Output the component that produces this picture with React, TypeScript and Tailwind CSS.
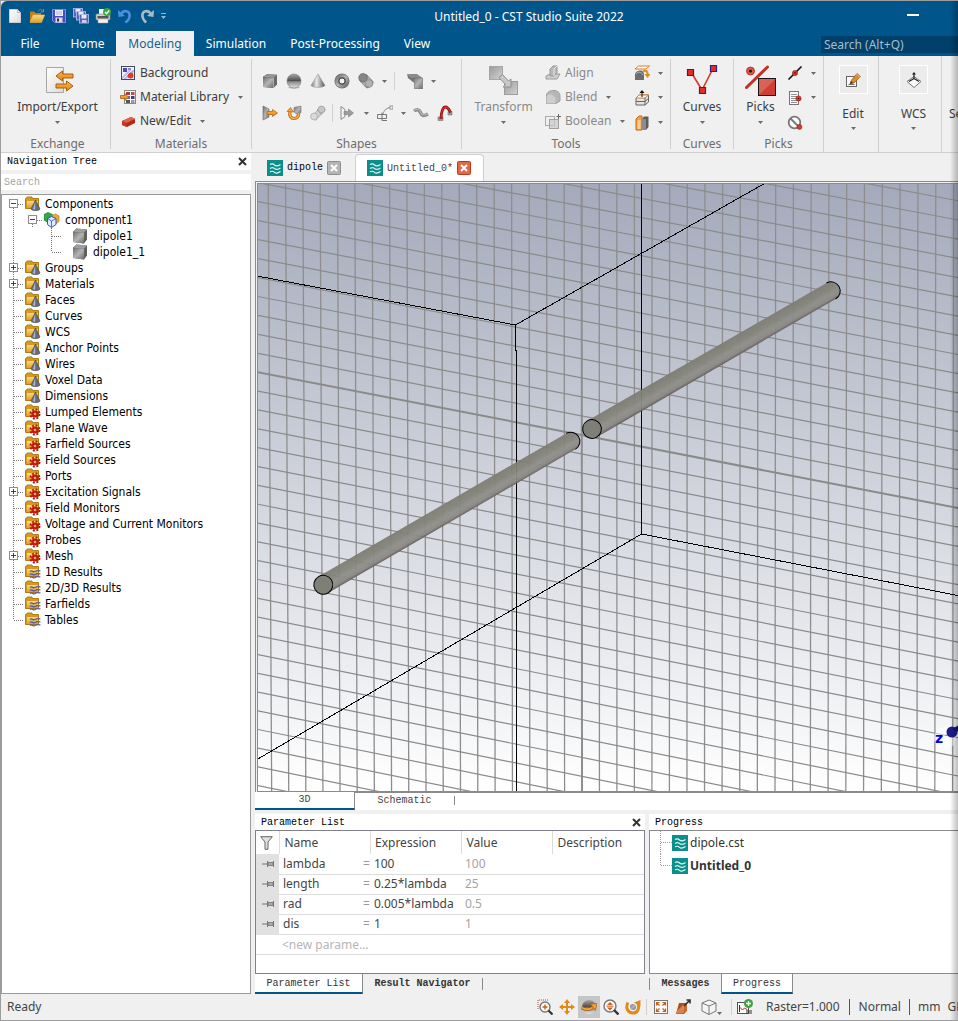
import React, { useState } from 'react';

interface TreeNode {
  label: string;
  icon: 'cone' | 'gear' | 'wave';
  expandable?: boolean;
}

interface Parameter {
  name: string;
  expression: string;
  value: string;
}

const treeNodes: TreeNode[] = [
  { label: 'Groups', icon: 'cone', expandable: true },
  { label: 'Materials', icon: 'cone', expandable: true },
  { label: 'Faces', icon: 'cone' },
  { label: 'Curves', icon: 'cone' },
  { label: 'WCS', icon: 'cone' },
  { label: 'Anchor Points', icon: 'cone' },
  { label: 'Wires', icon: 'cone' },
  { label: 'Voxel Data', icon: 'cone' },
  { label: 'Dimensions', icon: 'cone' },
  { label: 'Lumped Elements', icon: 'gear' },
  { label: 'Plane Wave', icon: 'gear' },
  { label: 'Farfield Sources', icon: 'gear' },
  { label: 'Field Sources', icon: 'gear' },
  { label: 'Ports', icon: 'gear' },
  { label: 'Excitation Signals', icon: 'gear', expandable: true },
  { label: 'Field Monitors', icon: 'gear' },
  { label: 'Voltage and Current Monitors', icon: 'gear' },
  { label: 'Probes', icon: 'gear' },
  { label: 'Mesh', icon: 'gear', expandable: true },
  { label: '1D Results', icon: 'wave' },
  { label: '2D/3D Results', icon: 'wave' },
  { label: 'Farfields', icon: 'wave' },
  { label: 'Tables', icon: 'wave' },
];

const parameters: Parameter[] = [
  { name: 'lambda', expression: '100', value: '100' },
  { name: 'length', expression: '0.25*lambda', value: '25' },
  { name: 'rad', expression: '0.005*lambda', value: '0.5' },
  { name: 'dis', expression: '1', value: '1' },
];

// Gradients shared by all the icons
const IconDefs = () => (
  <svg className="absolute h-0 w-0" aria-hidden="true">
    <defs>
      <linearGradient id="steel" x1="0" y1="0" x2="1" y2="1">
        <stop offset="0" stopColor="#6e6e6e" />
        <stop offset="0.5" stopColor="#b4b4b4" />
        <stop offset="1" stopColor="#6a6a6a" />
      </linearGradient>
      <linearGradient id="steelH" x1="0" y1="0" x2="1" y2="0">
        <stop offset="0" stopColor="#777" />
        <stop offset="0.4" stopColor="#e8e8e8" />
        <stop offset="1" stopColor="#555" />
      </linearGradient>
      <linearGradient id="ball" x1="0" y1="0" x2="0" y2="1">
        <stop offset="0" stopColor="#a8a8a8" />
        <stop offset="0.48" stopColor="#4e4e4e" />
        <stop offset="0.55" stopColor="#8a8a8a" />
        <stop offset="1" stopColor="#e6e6e6" />
      </linearGradient>
      <linearGradient id="gold" x1="0" y1="0" x2="0" y2="1">
        <stop offset="0" stopColor="#f8dc8c" />
        <stop offset="1" stopColor="#dd9f22" />
      </linearGradient>
      <linearGradient id="orange" x1="0" y1="0" x2="0" y2="1">
        <stop offset="0" stopColor="#fbb752" />
        <stop offset="1" stopColor="#e08412" />
      </linearGradient>
      <linearGradient id="paper" x1="0" y1="0" x2="1" y2="1">
        <stop offset="0" stopColor="#ffffff" />
        <stop offset="1" stopColor="#dcdcdc" />
      </linearGradient>
      <linearGradient id="pale" x1="0" y1="0" x2="1" y2="1">
        <stop offset="0" stopColor="#9c9c9c" />
        <stop offset="1" stopColor="#d2d2d2" />
      </linearGradient>
    </defs>
  </svg>
);

const Icon = ({ children, size = 16 }: { children: React.ReactNode; size?: number }) => (
  <svg width={size} height={size} viewBox={`0 0 ${size} ${size}`} fill="none" className="shrink-0" aria-hidden="true">
    {children}
  </svg>
);

const Arrow = ({ className = '' }: { className?: string }) => (
  <svg width="5" height="3" viewBox="0 0 5 3" className={`shrink-0 ${className}`} aria-hidden="true">
    <path d="M0 0h5L2.5 3z" fill="#6b6b6b" />
  </svg>
);

// ---- Quick access icons ----
const NewIcon = () => (
  <Icon>
    <path d="M2.5 1.5h8l3 3v10h-11z" fill="url(#paper)" stroke="#c9ced2" />
    <path d="M10.500 1.500v3h3z" fill="#fff" stroke="#9aa4ac" strokeWidth=".7" />
  </Icon>
);
const OpenIcon = () => (
  <Icon>
    <path d="M1 14V3.500h4.500l1 1.500H12v9z" fill="#b9801f" />
    <path d="M1 14.500L4 7h11.700L12.500 14.500z" fill="url(#gold)" stroke="#e9b94a" strokeWidth=".6" />
    <path d="M9 3.500C10.500 1 13 1 14 3.500M14.500 1v3h-3" stroke="#7d8a92" />
  </Icon>
);
const SaveIcon = () => (
  <Icon>
    <path d="M1.500 1.500h13v13h-11l-2-2z" fill="#4a4ac0" stroke="#9a9af0" strokeWidth=".8" />
    <rect x="4" y="2" width="8" height="6" fill="#eef1fb" />
    <path d="M5 4h6M5 6h6" stroke="#a9b0dd" />
    <rect x="4.500" y="9.500" width="7" height="5" fill="#dcdce8" />
    <rect x="6" y="10.500" width="2" height="3" fill="#333" />
  </Icon>
);
const SaveAllIcon = () => (
  <Icon>
    {[0, 3, 6].map((o) => (
      <g key={o} transform={`translate(${o} ${o})`}>
        <rect x=".5" y=".5" width="9" height="8.500" fill="#5a62b8" stroke="#b9bff0" strokeWidth=".8" />
        <rect x="2.500" y="1" width="5" height="3.500" fill="#e9edfb" />
        <rect x="3" y="6" width="4.500" height="2.800" fill="#cfd4ea" />
      </g>
    ))}
  </Icon>
);
const PrintIcon = () => (
  <Icon>
    <rect x="4" y="1" width="8" height="6" fill="#fafafa" />
    <rect x="1" y="6" width="14" height="6" rx="1" fill="#cfcfcf" stroke="#8f8f8f" strokeWidth=".6" />
    <rect x="2.500" y="8" width="11" height="2.500" fill="#555" />
    <rect x="3" y="11" width="10" height="4" fill="#f2f2f2" stroke="#999" strokeWidth=".5" />
    <circle cx="12" cy="4" r="4" fill="#3ba53b" />
    <path d="M10 4l1.500 1.700L14.200 2.500" stroke="#fff" strokeWidth="1.300" />
  </Icon>
);
const UndoIcon = () => (
  <Icon>
    <path d="M4 6C7 1.500 13 2.500 12.600 8c-.2 3-2 5-4.300 6.500" stroke="#4a90e0" strokeWidth="2.600" />
    <path d="M1 2l.500 7L8 8z" fill="#4a90e0" />
  </Icon>
);
const RedoIcon = () => (
  <Icon>
    <path d="M12 6C9 1.500 3 2.500 3.400 8c.2 3 1.600 4.600 3.800 6.500" stroke="#a9bac4" strokeWidth="2.600" />
    <path d="M15 2l-.5 7L8 8z" fill="#a9bac4" />
  </Icon>
);

// ---- Ribbon icons ----
const ImportExportIcon = () => (
  <Icon size={32}>
    <path d="M4.500 3.500h17v25h-17z" fill="url(#paper)" stroke="#a6a6a6" />
    <path d="M14 12l6.500-5v3H31v4H20.500v3z" fill="url(#orange)" stroke="#a8600c" />
    <path d="M31 22l-6.500-5v3H14v4h10.500v3z" fill="url(#orange)" stroke="#a8600c" />
  </Icon>
);
const BackgroundIcon = () => (
  <Icon>
    <rect x="1.500" y="1.500" width="13" height="13" fill="#eef0fa" stroke="#444a66" />
    <rect x="3" y="3" width="4" height="4" fill="#4a4ab8" />
    <rect x="8" y="3" width="3" height="2" fill="#8a8ad8" />
    <path d="M2 12L9 5h5v2L6 14H2z" fill="#b7b9ea" />
    <circle cx="10.500" cy="10.500" r="3" fill="#e23b2e" />
    <path d="M3 14L14 3" stroke="#fff" strokeWidth=".8" />
  </Icon>
);
const LibraryIcon = () => (
  <Icon>
    <rect x="4.500" y="1.500" width="11" height="13" fill="#fff" stroke="#888" />
    <rect x="6" y="3" width="4" height="3" fill="#b33a3a" />
    <rect x="11" y="3" width="3.500" height="3" fill="#c24a4a" />
    <rect x="6" y="7" width="4" height="3" fill="#6a6aa6" />
    <rect x="11" y="7" width="3.500" height="3" fill="#3b3b8c" />
    <rect x="6" y="11" width="4" height="3" fill="#555" />
    <rect x="11" y="11" width="3.500" height="3" fill="#999" />
    <path d="M8.500 8L5 4.500v2H.500v3H5v2z" fill="url(#orange)" stroke="#a8600c" strokeWidth=".8" />
  </Icon>
);
const BrickRedIcon = () => (
  <Icon>
    <path d="M2 8l9-4 4 2v4l-8 4-5-2z" fill="#b02a18" />
    <path d="M2 8l9-4 4 2-8.500 4z" fill="#e0604a" />
    <path d="M6.500 10v4L2 12V8z" fill="#c63a25" />
  </Icon>
);
const BrickIcon = () => (
  <Icon>
    <path d="M1 4l4-2.500 10 .5v9.500L11.500 15 1 14z" fill="#6a6a6a" />
    <path d="M1 4.500h10.500V15L1 14z" fill="url(#steel)" />
    <path d="M1 4.200L5 1.500l10 .5-3.500 3z" fill="#9b9b9b" stroke="#707070" strokeWidth=".6" />
    <path d="M11.500 5v10" stroke="#c9c9c9" strokeWidth=".6" />
  </Icon>
);
const SphereIcon = () => (
  <Icon>
    <ellipse cx="8" cy="14.500" rx="6" ry="1.200" fill="#bbb" />
    <circle cx="8" cy="8" r="7" fill="url(#ball)" stroke="#777" strokeWidth=".6" />
  </Icon>
);
const ConeIcon = () => (
  <Icon>
    <path d="M8 1l7 11.500c-2 2.500-12 2.500-14 0z" fill="url(#steelH)" stroke="#888" strokeWidth=".5" />
  </Icon>
);
const TorusIcon = () => (
  <Icon>
    <circle cx="8" cy="8" r="7.500" fill="#6a6a6a" />
    <circle cx="8" cy="8" r="5.500" stroke="url(#steel)" strokeWidth="3" />
    <circle cx="8" cy="8" r="3" fill="#f2f2f2" stroke="#4c4c4c" />
  </Icon>
);
const CylinderIcon = () => (
  <Icon>
    <path d="M1.500 7.500L8 14.500c2 1.800 8-2.500 7-6L8.500 1.500z" fill="url(#steel)" stroke="#6c6c6c" strokeWidth=".6" />
    <circle cx="5" cy="4.800" r="4.300" fill="#868686" stroke="#5e5e5e" strokeWidth=".6" />
    <circle cx="11" cy="10.500" r="3.800" fill="#b2b2b2" stroke="#808080" strokeWidth=".6" />
  </Icon>
);
const BendIcon = () => (
  <Icon>
    <path d="M0 1h10l5.500 4H6z" fill="#8b8b8b" />
    <path d="M0 1l6 4v4L1 5z" fill="#767676" />
    <path d="M6 5h9.500v11H7.500V9H6z" fill="url(#steel)" stroke="#6b6b6b" strokeWidth=".6" />
  </Icon>
);
const ExtrudeIcon = () => (
  <Icon>
    <path d="M1 1l6 3v8l-6 3z" fill="url(#steel)" stroke="#666" strokeWidth=".6" />
    <path d="M5 6.500h5.500v-2l5 3.500-5 3.500v-2H5z" fill="url(#orange)" stroke="#b5670c" strokeWidth=".8" />
  </Icon>
);
const RotateIcon = () => (
  <Icon>
    <path d="M8 2.500l7-1.500v6.500L12 10 8 7z" fill="url(#steel)" stroke="#777" strokeWidth=".6" />
    <path d="M4 6c-1 5 1 7.500 4 7.500s5-2 4.500-5.500" stroke="#b5670c" strokeWidth="3.200" />
    <path d="M4 6c-1 5 1 7.500 4 7.500s5-2 4.500-5.500" stroke="#f8ad45" strokeWidth="1.700" />
    <path d="M1 6.500l3.500-4 3 4.500z" fill="#f6a63a" stroke="#b5670c" strokeWidth=".7" />
  </Icon>
);
const LoftIcon = () => (
  <Icon>
    <path d="M1 11.500L8 5l3.500 4L5.500 15.500z" fill="#cfcfcf" stroke="#a4a4a4" strokeWidth=".7" />
    <circle cx="4" cy="11.500" r="3.400" fill="#dadada" stroke="#a4a4a4" strokeWidth=".7" />
    <path d="M7 5l4-4 4.500 3.500-4 5z" fill="#bdbdbd" stroke="#9d9d9d" strokeWidth=".7" />
    <circle cx="11.500" cy="4.500" r="3.400" fill="#c6c6c6" stroke="#9d9d9d" strokeWidth=".7" />
  </Icon>
);
const ExtrudeGreyIcon = () => (
  <Icon>
    <path d="M2 1.500l4 3v7l-4 3z" fill="#f4f4f4" stroke="#8a8a8a" />
    <path d="M5 6.500h4.500V4l5 4-5 4V9.500H5z" fill="#9c9c9c" stroke="#808080" strokeWidth=".6" />
  </Icon>
);
const TraceIcon = () => (
  <Icon>
    <path d="M6 9C7 5 10 2.500 14 2.500" stroke="#8a8a8a" />
    <rect x="13" y="1" width="3" height="3" fill="#fff" stroke="#777" strokeWidth=".8" />
    <path d="M.500 9.500h9v4h-9zM5 7.500v8h5" stroke="#777" />
  </Icon>
);
const WireGreyIcon = () => (
  <Icon>
    <path d="M1 6c4-3 6 0 7 2.500s3 2.500 7 .500" stroke="#8a8a8a" strokeWidth="3.400" />
    <path d="M1 5.500c4-3 6 0 7 2.500s3 2.500 7 .500" stroke="#b4b4b4" strokeWidth="1.300" />
  </Icon>
);
const BondWireIcon = () => (
  <Icon>
    <path d="M1 12h5v3.500H1zM11 6.500h4v3.500h-4z" fill="#9a9a9a" stroke="#777" strokeWidth=".6" />
    <path d="M4 14C4 7 6 2 8.500 2S12 4.500 13.500 7.500" stroke="#8d0c0c" strokeWidth="2.800" />
    <path d="M4 14C4 7 6 2 8.500 2S12 4.500 13.500 7.500" stroke="#d42a2a" strokeWidth="1.300" />
  </Icon>
);
const TransformIcon = () => (
  <Icon size={32}>
    <rect x="1.500" y="2.500" width="13" height="13" fill="url(#pale)" stroke="#a6a6a6" />
    <rect x="16.500" y="17.500" width="13" height="13" fill="url(#pale)" stroke="#9c9c9c" />
    <path d="M11 13.500l3.500-3 6 6.500 2.500-2v8h-8l2.500-2.500z" fill="#c8c8c8" stroke="#8f8f8f" />
  </Icon>
);
const AlignIcon = () => (
  <Icon>
    <path d="M1 11l4-2h10l-3 5H1z" fill="#cfcfcf" stroke="#9a9a9a" />
    <path d="M5 11V4l3-3h4v7l-3 3z" fill="#b8b8b8" stroke="#989898" />
    <path d="M9 11V4l3-3" stroke="#e8e8e8" />
  </Icon>
);
const BlendIcon = () => (
  <Icon>
    <path d="M1.500 5.500C3 2 6 1.500 9 1.500c3 0 6 2 6 5V12l-4 2.500H1.500z" fill="#b6b6b6" stroke="#a0a0a0" />
    <path d="M1.500 14.500v-7C3.500 4 8 4.500 10.500 9v5.500z" fill="#cdcdcd" />
  </Icon>
);
const BooleanIcon = () => (
  <Icon>
    <rect x=".5" y="3.500" width="9" height="9" stroke="#aaa" />
    <rect x="4.500" y="6.500" width="9" height="9" fill="#c9c9c9" fillOpacity=".7" stroke="#a0a0a0" />
    <path d="M11.500 3.500h5M13.500 1v5" stroke="#666" />
  </Icon>
);
const LocalWcsIcon = () => (
  <Icon>
    <path d="M4.500 1h11l-3.500 3H1z" fill="#fff" stroke="#e07a1c" />
    <path d="M1 9c1-3 4-3.500 5-3.500 3 0 4 2 4 5V15H1z" fill="#6d6d6d" />
    <path d="M2 9c2-2.500 5-2.500 7 1" stroke="#bbb" />
    <path d="M9 6c4-1 5 1 4.500 4" stroke="#e08a1c" strokeWidth="2" />
    <path d="M10.500 9h6l-3 4z" fill="#e08a1c" />
  </Icon>
);
const ShellIcon = () => (
  <Icon>
    <path d="M2 8v7h9l3.500-3V5H5z" fill="#e4e4e4" stroke="#666" />
    <path d="M2 8l3-3h9.500L11 8z" fill="#fff" stroke="#e07a1c" />
    <path d="M2 11.500h9l3.500-3M11 8v7" stroke="#666" />
    <path d="M8 7V2" stroke="#111" />
    <path d="M5.500 3L8 0l2.500 3z" fill="#111" />
  </Icon>
);
const SliceIcon = () => (
  <Icon>
    <path d="M2 4l3-3h3v14H2z" fill="#f0a24a" stroke="#c8690f" />
    <path d="M8 4l2-2.500h4.500V12L12 15H8z" fill="#5c5c5c" />
    <path d="M8 4h4v11H8z" fill="#8c8c8c" />
    <rect x="3.500" y="5" width="3" height="9" fill="#f8cd92" />
  </Icon>
);
const CurvesIcon = () => (
  <Icon size={32}>
    <path d="M5 8L16 26 27 4.500" stroke="#d6392b" strokeWidth="1.600" />
    <path d="M1.500 5.500h6v6h-6zM24.500 1.500h6v6h-6zM13.500 23.500h6v6h-6z" fill="#e0301e" stroke="#2a1f9c" strokeWidth="1.200" />
  </Icon>
);
const PicksIcon = () => (
  <Icon size={32}>
    <path d="M1.500 23.500L22.500 3" stroke="#c33126" strokeWidth="3" strokeLinecap="round" />
    <circle cx="5.500" cy="7" r="4" fill="#e05545" stroke="#a82a1e" strokeWidth=".8" />
    <circle cx="5.500" cy="7" r="1.500" fill="#111" />
    <rect x="13.500" y="14.500" width="17" height="17" fill="#cf3f35" stroke="#161616" />
    <path d="M14 31V15h16.500z" fill="#d96258" />
  </Icon>
);
const PickPointIcon = () => (
  <Icon>
    <path d="M1.500 14.500L14.500 1.500" stroke="#111" strokeWidth="1.600" />
    <circle cx="8" cy="8" r="2.600" fill="#d93a2b" stroke="#8e1a10" strokeWidth=".6" />
    <circle cx="8" cy="8" r=".8" fill="#300" />
  </Icon>
);
const PickListIcon = () => (
  <Icon>
    <rect x="2.500" y="1.500" width="9" height="13" fill="#fafafa" stroke="#777" />
    <path d="M4 4.500h6M4 6.500h6M4 8.500h6M4 10.500h6M4 12.500h6" stroke="#888" strokeWidth=".9" />
    <circle cx="11.500" cy="8.500" r="2.600" fill="#d93a2b" stroke="#8e1a10" strokeWidth=".6" />
    <circle cx="11.500" cy="8.500" r=".7" fill="#300" />
  </Icon>
);
const PickClearIcon = () => (
  <Icon>
    <circle cx="7.500" cy="7.500" r="5.800" fill="#fafafa" stroke="#777" strokeWidth="1.800" />
    <path d="M3.500 3.500l8 8" stroke="#777" strokeWidth="1.800" />
    <circle cx="12.500" cy="12" r="2.400" fill="#d93a2b" stroke="#8e1a10" strokeWidth=".6" />
  </Icon>
);
const EditIcon = () => (
  <Icon>
    <rect x="1.500" y="4.500" width="10" height="10" fill="#fafafa" stroke="#666" />
    <path d="M3.500 12.500h6" stroke="#777" />
    <path d="M5 12l1.500-4L12 1.500 15.500 4.500 9 11z" fill="#e08a2c" stroke="#8a5a1c" strokeWidth=".7" />
    <path d="M12 1.500l3.500 3-1 1.300-3.600-3z" fill="#c9a27a" />
    <path d="M5 12l1-3 2 2z" fill="#333" />
  </Icon>
);
const WcsIcon = () => (
  <Icon>
    <path d="M1 9.500L8 4.500l7 5-7 6z" fill="#fafafa" stroke="#777" />
    <path d="M8 6.500V1M8 6.500L3 9.500M8 6.500l5 3" stroke="#222" strokeWidth="1.200" />
    <path d="M6 2.500L8 0l2 2.500z" fill="#222" />
  </Icon>
);
const CstLogo = () => (
  <Icon>
    <rect width="16" height="16" fill="#0b8f8a" />
    <path d="M3 4.500c2-1 3.500-.5 4.500.5s3 1.500 6-.5" stroke="#e6f6f5" strokeWidth="1.200" />
    <path d="M3 8.500c2-1.500 3.500-1 4.500 0s3 1.500 6-.5" stroke="#cfeeec" strokeWidth="1.200" />
    <path d="M3 11.800c2-1 3.500-.5 4.500.5s3 1.200 6-.8" stroke="#e6f6f5" strokeWidth="1.200" />
  </Icon>
);

// ---- Tree icons ----
const FolderIcon = ({ kind }: { kind: TreeNode['icon'] }) => (
  <Icon>
    <path d="M.500 12.500V2.500h1l.500-1.500h5l.500 1.500h6v10z" fill="#d49a1e" stroke="#b37c0c" />
    <path d="M2 12V5h11v7z" fill="url(#gold)" />
    {kind === 'cone' && <path d="M10.500 4l4.500 9c-1 2-8 2-9 0z" fill="#6a6e80" stroke="#454857" strokeWidth=".7" />}
    {kind === 'cone' && <path d="M10.200 6l-2.200 7.500h2z" fill="#b9bdcb" />}
    {kind === 'gear' && (
      <g>
        <circle cx="10" cy="10" r="3.600" fill="#c01616" />
        <circle cx="10" cy="10" r="4.600" stroke="#b01010" strokeWidth="1.800" strokeDasharray="2 1.610" />
        <circle cx="10" cy="10" r="1.300" fill="#e9b44c" />
      </g>
    )}
    {kind === 'wave' && (
      <path
        d="M5 7.500c2-2 3 1.500 5 0s3-1 5.500-.5M5 10.500c2-2 3 1.500 5 0s3-1 5.500-.5M5 13.500c2-2 3 1.500 5 0s3-1 5.500-.5"
        stroke="#5a5a9c"
        strokeWidth="1.200"
      />
    )}
  </Icon>
);
const ComponentIcon = () => (
  <Icon>
    <path d="M0 2.500l4-2 4.500 2V8L4 10.500 0 8z" fill="#2fa84a" stroke="#1d7c31" strokeWidth=".7" />
    <path d="M7.500 4l4-2L15 4v5.500L11.500 12 7.500 9z" fill="#f0a830" stroke="#c27c10" strokeWidth=".7" />
    <path d="M3.500 6.500l4-2 4.500 2v6L7.500 15.500l-4-3z" fill="#dfe9ff" stroke="#2f52d0" />
    <path d="M3.500 6.500l4 2.500L12 6.500M7.500 9v6.500" stroke="#2f52d0" strokeWidth=".8" />
  </Icon>
);
const SolidIcon = () => (
  <Icon>
    <path d="M1 3.500L4.500 .500 15 1.500v10L12 15.500 1 14z" fill="#5f5f5f" />
    <path d="M1 4l11 .5v11L1 14z" fill="url(#steel)" />
    <path d="M1 3.800L4.500 .500 15 1.500l-3 3z" fill="#9e9e9e" />
  </Icon>
);

const Expander = ({ open }: { open?: boolean }) => (
  <g>
    <rect x="7.500" y="3.500" width="8" height="8" fill="#fff" stroke="#8f8f8f" />
    <path d={open ? 'M9 7.500h5' : 'M9 7.500h5M11.500 5v5'} stroke="#2c3f8f" />
  </g>
);

// Dotted connector of a tree row, with an optional expander box over it
const Guide = ({ first, last, box, open }: { first?: boolean; last?: boolean; box?: boolean; open?: boolean }) => (
  <svg width="23" height="16" fill="none" className="shrink-0" shapeRendering="crispEdges" aria-hidden="true">
    <path d={`M11.500 ${first ? 8 : 0}V${last ? 8 : 16}M11.500 8.500H22`} stroke="#777" strokeDasharray="1 1" />
    {box && <Expander open={open} />}
  </svg>
);

// Keeps the root line going past the nested rows
const TreeLine = () => (
  <svg width="19" height="16" className="shrink-0" shapeRendering="crispEdges" aria-hidden="true">
    <path d="M11.500 0V16" stroke="#777" strokeDasharray="1 1" />
  </svg>
);

const CloseGlyph = () => (
  <svg width="9" height="9" viewBox="0 0 9 9" aria-hidden="true">
    <path d="M1 1l7 7M8 1L1 8" stroke="#333" strokeWidth="2" />
  </svg>
);

// ---- Ribbon building blocks ----
const RibbonGroup = ({ label, className, children }: { label: string; className: string; children: React.ReactNode }) => (
  <section className={`flex h-24 shrink-0 flex-col ${className}`}>
    <div className="flex flex-1">{children}</div>
    <h2 className="text-center text-[12px] leading-4 text-[#6d6d6d]">{label}</h2>
  </section>
);

const Separator = ({ className = 'my-[3px]' }: { className?: string }) => (
  <div className={`w-px shrink-0 bg-[#d0d0d0] ${className}`} />
);

const LargeButton = ({ label, icon, className, muted }: { label: string; icon: React.ReactNode; className: string; muted?: boolean }) => (
  <button className={`flex shrink-0 flex-col items-center pt-2 ${className}`}>
    {icon}
    <span className={`mt-px text-[12px] leading-5 ${muted ? 'text-[#8a8a8a]' : 'text-[#3d3d3d]'}`}>{label}</span>
    <Arrow className="mt-1" />
  </button>
);

const RowButton = ({ label, icon, arrow, muted }: { label: string; icon: React.ReactNode; arrow?: boolean; muted?: boolean }) => (
  <button className="flex h-6 items-center">
    {icon}
    <span className={`ml-1 text-[12px] leading-5 ${muted ? 'text-[#8a8a8a]' : 'text-[#3d3d3d]'}`}>{label}</span>
    {arrow && <Arrow className="ml-[9px]" />}
  </button>
);

const IconButton = ({ label, className = 'w-6', children }: { label: string; className?: string; children: React.ReactNode }) => (
  <button aria-label={label} className={`flex h-6 shrink-0 items-center justify-center ${className}`}>
    {children}
  </button>
);

const BoxedButton = ({ label, icon, className }: { label: string; icon: React.ReactNode; className: string }) => (
  <button className={`flex h-24 shrink-0 flex-col items-center pt-[9px] ${className}`}>
    <span className="flex h-[29px] w-[29px] items-center justify-center border border-white bg-[#ececec]">{icon}</span>
    <span className="mt-[10px] text-[12px] leading-5 text-[#3d3d3d]">{label}</span>
    <Arrow className="mt-[3px]" />
  </button>
);

const TitleBar = () => (
  <div className="relative flex h-[30px] items-center gap-[6px] pl-[6px]">
    <button aria-label="New"><NewIcon /></button>
    <button aria-label="Open"><OpenIcon /></button>
    <button aria-label="Save"><SaveIcon /></button>
    <button aria-label="Save all"><SaveAllIcon /></button>
    <button aria-label="Print"><PrintIcon /></button>
    <button aria-label="Undo"><UndoIcon /></button>
    <button aria-label="Redo"><RedoIcon /></button>
    <button aria-label="Customize">
      <svg width="5" height="6" viewBox="0 0 5 6"><path d="M0 .500h5" stroke="#9fb6c6" /><path d="M0 3h5L2.500 6z" fill="#9fb6c6" /></svg>
    </button>
    <h1 className="ml-[100px] flex-1 pr-[172px] pt-[2px] text-center text-[12px] text-white">Untitled_0 - CST Studio Suite 2022</h1>
    <button aria-label="Minimize" className="absolute right-[39px] top-[13px] h-[2px] w-3 bg-white" />
  </div>
);

const MenuTabs = () => (
  <nav className="flex h-[25px] items-stretch text-[12px] leading-6 text-white">
    <button className="w-[58px]">File</button>
    <button className="w-[57px]">Home</button>
    <button className="w-[78px] bg-[#f0f0f0] text-[#1c5f8c]">Modeling</button>
    <button className="w-[84px]">Simulation</button>
    <button className="w-[114px]">Post-Processing</button>
    <button className="w-[50px]">View</button>
    <input
      aria-label="Search commands"
      placeholder="Search (Alt+Q)"
      className="mb-[3px] ml-auto mt-[5px] w-[137px] bg-[#00406a] pl-[3px] text-[12px] text-white outline-none placeholder:text-[#a9bccb]"
    />
  </nav>
);

const Ribbon = () => (
  <div className="flex h-[97px] shrink-0 overflow-hidden border-b border-[#d0d0d0] bg-[#f0f0f0]">
    <RibbonGroup label="Exchange" className="w-[109px] pl-1">
      <LargeButton label="Import/Export" icon={<ImportExportIcon />} className="w-full" />
    </RibbonGroup>
    <Separator />
    <RibbonGroup label="Materials" className="w-[140px]">
      <div className="flex flex-col items-start pl-[9px] pt-[5px]">
        <RowButton label="Background" icon={<BackgroundIcon />} />
        <RowButton label="Material Library" icon={<LibraryIcon />} arrow />
        <RowButton label="New/Edit" icon={<BrickRedIcon />} arrow />
      </div>
    </RibbonGroup>
    <Separator />
    <RibbonGroup label="Shapes" className="w-[209px]">
      <div className="flex flex-col pl-[6px] pt-[9px]">
        <div className="flex h-8 items-center">
          <IconButton label="Brick"><BrickIcon /></IconButton>
          <IconButton label="Sphere"><SphereIcon /></IconButton>
          <IconButton label="Cone"><ConeIcon /></IconButton>
          <IconButton label="Torus"><TorusIcon /></IconButton>
          <IconButton label="Cylinder"><CylinderIcon /></IconButton>
          <IconButton label="More shapes" className="w-3"><Arrow /></IconButton>
          <Separator className="mx-1 h-[18px]" />
          <IconButton label="Bend" className="ml-1 w-6"><BendIcon /></IconButton>
          <IconButton label="More bends" className="w-3"><Arrow /></IconButton>
        </div>
        <div className="flex h-8 items-center">
          <IconButton label="Extrude"><ExtrudeIcon /></IconButton>
          <IconButton label="Rotate"><RotateIcon /></IconButton>
          <IconButton label="Loft"><LoftIcon /></IconButton>
          <Separator className="mx-[2px] h-[18px]" />
          <IconButton label="Extrude face"><ExtrudeGreyIcon /></IconButton>
          <IconButton label="More faces" className="w-[14px]"><Arrow /></IconButton>
          <IconButton label="Trace"><TraceIcon /></IconButton>
          <IconButton label="More traces" className="w-3"><Arrow /></IconButton>
          <IconButton label="Wire"><WireGreyIcon /></IconButton>
          <IconButton label="Bond wire"><BondWireIcon /></IconButton>
        </div>
      </div>
    </RibbonGroup>
    <Separator />
    <RibbonGroup label="Tools" className="w-[208px]">
      <LargeButton label="Transform" icon={<TransformIcon />} className="w-[83px]" muted />
      <div className="flex w-[87px] flex-col items-start pt-[5px]">
        <RowButton label="Align" icon={<AlignIcon />} muted />
        <RowButton label="Blend" icon={<BlendIcon />} arrow muted />
        <RowButton label="Boolean" icon={<BooleanIcon />} arrow muted />
      </div>
      <div className="grid grid-cols-[20px_16px] items-center pb-[1px] pt-[5px]">
        <IconButton label="Local WCS" className="w-5"><LocalWcsIcon /></IconButton>
        <Arrow className="ml-[6px]" />
        <IconButton label="Shell" className="w-5"><ShellIcon /></IconButton>
        <Arrow className="ml-[6px]" />
        <IconButton label="Slice" className="w-5"><SliceIcon /></IconButton>
        <Arrow className="ml-[6px]" />
      </div>
    </RibbonGroup>
    <Separator />
    <RibbonGroup label="Curves" className="w-[62px]">
      <LargeButton label="Curves" icon={<CurvesIcon />} className="w-full" />
    </RibbonGroup>
    <Separator />
    <RibbonGroup label="Picks" className="w-[89px]">
      <LargeButton label="Picks" icon={<PicksIcon />} className="w-[53px]" />
      <div className="grid grid-cols-[16px_16px] items-center pb-[1px] pt-[5px]">
        <IconButton label="Pick point" className="w-4"><PickPointIcon /></IconButton>
        <Arrow className="ml-2" />
        <IconButton label="Pick list" className="w-4"><PickListIcon /></IconButton>
        <Arrow className="ml-2" />
        <IconButton label="Clear picks" className="w-4"><PickClearIcon /></IconButton>
      </div>
    </RibbonGroup>
    <Separator className="" />
    <BoxedButton label="Edit" icon={<EditIcon />} className="w-[54px] pl-1" />
    <Separator className="" />
    <BoxedButton label="WCS" icon={<WcsIcon />} className="w-[62px] pl-[7px]" />
    <Separator className="" />
    <button className="h-24 shrink-0 pl-[7px] pt-5 text-[12px] text-[#3d3d3d]">Section</button>
  </div>
);

const NavigationTree = () => (
  <aside className="mr-1 flex w-[250px] shrink-0 flex-col">
    <div className="flex h-[17px] items-center justify-between bg-white pl-[6px] pr-1 font-['Liberation_Mono',monospace] text-[10px] text-black">
      <h2>Navigation Tree</h2>
      <button aria-label="Close navigation tree"><CloseGlyph /></button>
    </div>
    <input
      aria-label="Search tree"
      placeholder="Search"
      className="mt-1 h-4 bg-white pl-[3px] font-['Liberation_Mono',monospace] text-[10px] outline-none placeholder:text-[#a3a3a3]"
    />
    <ul className="mt-1 flex-1 overflow-hidden border border-[#9b9b9b] bg-white pt-px font-['DejaVu_Sans_Condensed','DejaVu_Sans',sans-serif] text-[12px] leading-4 text-black">
      <li>
        <div className="flex h-4 items-center"><Guide first box open /><FolderIcon kind="cone" /><span className="ml-1">Components</span></div>
        <ul>
          <li className="flex h-4 items-center">
            <TreeLine />
            <Guide box open first />
            <ComponentIcon />
            <span className="ml-[5px]">component1</span>
          </li>
          <li className="flex h-4 items-center">
            <TreeLine />
            <span className="w-[19px]" />
            <Guide />
            <span className="ml-[9px] flex items-center gap-[5px]"><SolidIcon />dipole1</span>
          </li>
          <li className="flex h-4 items-center">
            <TreeLine />
            <span className="w-[19px]" />
            <Guide last />
            <span className="ml-[9px] flex items-center gap-[5px]"><SolidIcon />dipole1_1</span>
          </li>
        </ul>
      </li>
      {treeNodes.map((node, index) => (
        <li key={node.label} className="flex h-4 items-center">
          <Guide box={node.expandable} last={index === treeNodes.length - 1} />
          <FolderIcon kind={node.icon} />
          <span className="ml-1">{node.label}</span>
        </li>
      ))}
    </ul>
  </aside>
);

const DocumentTabs = () => (
  <div className="flex h-7 shrink-0 items-end font-['Liberation_Mono',monospace] text-[10px] text-black">
    <div className="flex h-[27px] w-[100px] items-center gap-1 pl-3">
      <CstLogo />
      <button>dipole</button>
      <button aria-label="Close dipole">
        <Icon size={14}>
          <rect x=".5" y=".5" width="13" height="13" rx="1" fill="#b5b5b5" stroke="#8c8c8c" />
          <path d="M4 4l6 6M10 4l-6 6" stroke="#fff" strokeWidth="2" />
        </Icon>
      </button>
    </div>
    <div className="flex h-[27px] w-[129px] items-center gap-1 rounded-t-sm border border-b-0 border-[#cfcfcf] bg-white pl-[11px]">
      <CstLogo />
      <button className="text-[#444]">Untitled_0*</button>
      <button aria-label="Close Untitled_0">
        <Icon size={14}>
          <rect x=".5" y=".5" width="13" height="13" rx="1" fill="#dc6a45" stroke="#b93a1c" />
          <path d="M4 4l6 6M10 4l-6 6" stroke="#fff" strokeWidth="2" />
        </Icon>
      </button>
    </div>
  </div>
);

const Rod = ({ x, y, length, angle, near, far }: { x: number; y: number; length: number; angle: number; near: number; far: number }) => (
  <g transform={`translate(${x} ${y}) rotate(${angle})`}>
    <path
      d={`M0 ${-near}L${length} ${-far}A${far} ${far} 0 0 1 ${length} ${far}L0 ${near}z`}
      fill="url(#rod)"
      fillOpacity=".94"
    />
    <path d={`M${length} ${-far}A${far} ${far} 0 0 1 ${length} ${far}`} stroke="#000" />
    <circle r={near} fill="#7e7f76" stroke="#000" />
  </g>
);

const Viewport = () => {
  const verticals = Array.from({ length: 60 }, (_, n) => n - 18);
  const obliques = Array.from({ length: 56 }, (_, n) => n - 24);
  return (
    <div className="relative min-h-0 flex-1 overflow-hidden border border-r-0 border-[#8b8b8b] bg-gradient-to-b from-[#a4aabb] to-white">
      <svg className="absolute inset-0 h-full w-full" fill="none" role="img" aria-label="3D model view">
        <defs>
          <linearGradient id="rod" x1="0" y1="0" x2="0" y2="1">
            <stop offset="0" stopColor="#7c7c72" />
            <stop offset="0.4" stopColor="#84847a" />
            <stop offset="0.62" stopColor="#8f8f89" />
            <stop offset="0.85" stopColor="#8b8783" />
            <stop offset="1" stopColor="#5e5b58" />
          </linearGradient>
        </defs>
        <g transform="translate(-258 -184)">
          {verticals.map((i) => (
            <path
              key={i}
              d={`M${581.7 + 17.55 * i + 0.0077 * i * i} 183L${582 + 17.43 * i + 0.0105 * i * i} 791`}
              stroke="#8e8e8f"
              strokeWidth={i === 0 ? 2 : 1.3}
            />
          ))}
          {obliques.map((k) => (
            <path
              key={k}
              d={`M257 ${372 + 18.9 * k - 0.005 * k * k}L958 ${508 + 19.17 * k - 0.002 * k * k}`}
              stroke="#8a8a8a"
              strokeWidth={k === 0 ? 2 : 1.2}
            />
          ))}
          <path
            d="M257 276L515.500 325L763.500 184M515.500 325V350L516.500 351V791M641.500 183V534L958 595.500M641.500 534L257 759.500"
            stroke="#000"
            shapeRendering="crispEdges"
          />
          <Rod x={592} y={429} length={276} angle={-30} near={9.4} far={9.2} />
          <Rod x={323.3} y={584.8} length={286} angle={-30.1} near={9.5} far={9.2} />
          <circle cx="945" cy="738" r="11" fill="#fff" fillOpacity=".5" />
          <path d="M945 736l6-6 5 5-9 1z" fill="#8a8ac8" />
          <circle cx="952" cy="732" r="5.500" fill="#1c1c8c" />
          <path d="M952 729l7-4v7z" fill="#15156e" />
          <text x="935" y="743" className="fill-[#0000f0] font-['DejaVu_Sans',sans-serif] text-[14px] font-bold">z</text>
        </g>
      </svg>
    </div>
  );
};

const ViewTabs = () => (
  <div className="flex h-[18px] shrink-0 bg-white font-['Liberation_Mono',monospace] text-[10px] leading-4 text-[#444]">
    <button className="w-[100px] border-b-2 border-r border-b-[#00558a] border-r-[#8b8b8b]">3D</button>
    <div className="flex flex-1 items-start border-t border-[#8b8b8b]">
      <button className="w-[99px]">Schematic</button>
      <span className="mt-[3px] h-[9px] w-px bg-[#8b8b8b]" />
    </div>
  </div>
);

const ParameterList = () => (
  <div className="flex w-[390px] shrink-0 flex-col">
    <div className="flex h-4 shrink-0 items-center justify-between bg-white pl-[6px] pr-1 font-['Liberation_Mono',monospace] text-[10px] text-black">
      <h2>Parameter List</h2>
      <button aria-label="Close parameter list"><CloseGlyph /></button>
    </div>
    <div className="flex-1 border border-[#80808a] bg-white">
      <table className="w-full table-fixed border-collapse text-left text-[12px] text-[#444]">
        <colgroup>
          <col className="w-[23px]" />
          <col className="w-[84px]" />
          <col className="w-[98px]" />
          <col className="w-[91px]" />
          <col />
        </colgroup>
        <thead>
          <tr className="h-[23px] leading-[23px]">
            <th aria-label="Filter" className="border-r border-[#dcdcdc] pl-1">
              <svg width="13" height="14" viewBox="0 0 13 14"><path d="M.700.700h11.600L8 6v7.300H5V6z" fill="#e0e0e0" stroke="#666" /></svg>
            </th>
            <th className="pl-[5px] font-normal">Name</th>
            <th className="font-normal"><span className="ml-[7px] block border-l border-[#dcdcdc] pl-1">Expression</span></th>
            <th className="border-l border-[#dcdcdc] pl-[5px] font-normal">Value</th>
            <th className="border-l border-[#dcdcdc] pl-[5px] font-normal">Description</th>
          </tr>
        </thead>
        <tbody>
          {parameters.map((param) => (
            <tr key={param.name} className="h-5 border-b border-[#dcdcdc] leading-[18px]">
              <td className="border-b border-[#e1e1e1] bg-[#e1e1e1] pl-[6px]">
                <svg width="12" height="8" viewBox="0 0 12 8"><path d="M0 4h5M5.500 1v6M11.500 1v6" stroke="#777" /><rect x="6" y="2.500" width="5" height="3" fill="#aaa" stroke="#777" strokeWidth=".8" /></svg>
              </td>
              <td className="pl-1">{param.name}</td>
              <td><span className="mr-1 text-[#9a9a9a]">=</span>{param.expression}</td>
              <td className="pl-1 text-[#a3a3a3]">{param.value}</td>
              <td />
            </tr>
          ))}
          <tr className="h-5 border-b border-[#dcdcdc] leading-[18px]">
            <td />
            <td colSpan={4} className="pl-[3px] pt-px text-[#b5b5b5]">&lt;new parame...</td>
          </tr>
        </tbody>
      </table>
    </div>
    <div className="flex h-5 shrink-0 font-['Liberation_Mono',monospace] text-[10px] leading-5 text-[#333]">
      <button className="w-[108px] border-b-2 border-r border-b-[#00558a] border-r-[#8b8b8b] bg-white">Parameter List</button>
      <button className="w-[119px] font-bold">Result Navigator</button>
      <span className="mt-1 h-3 w-px bg-[#8b8b8b]" />
    </div>
  </div>
);

const ProgressPanel = () => (
  <div className="ml-1 flex min-w-0 flex-1 flex-col">
    <div className="flex h-4 shrink-0 items-center bg-white pl-[6px] font-['Liberation_Mono',monospace] text-[10px] text-black">
      <h2>Progress</h2>
    </div>
    <ul className="flex-1 border border-r-0 border-[#8b8b8b] bg-white text-[12px] text-[#333]">
      <li className="flex h-[23px] items-center">
        <svg width="22" height="23" fill="none" shapeRendering="crispEdges" aria-hidden="true"><path d="M10.500 0V23M10.500 11.500H22" stroke="#999" strokeDasharray="1 1" /></svg>
        <CstLogo />
        <span className="ml-[2px]">dipole.cst</span>
      </li>
      <li className="flex h-[23px] items-center font-bold">
        <svg width="22" height="23" fill="none" shapeRendering="crispEdges" aria-hidden="true"><path d="M10.500 0V11.500H22" stroke="#999" strokeDasharray="1 1" /></svg>
        <CstLogo />
        <span className="ml-[2px]">Untitled_0</span>
      </li>
    </ul>
    <div className="flex h-5 shrink-0 font-['Liberation_Mono',monospace] text-[10px] leading-5 text-[#333]">
      <span className="mt-1 h-3 w-px bg-[#8b8b8b]" />
      <button className="w-[71px] font-bold">Messages</button>
      <button className="w-[72px] border-x border-b-2 border-x-[#8b8b8b] border-b-[#00558a] bg-white">Progress</button>
    </div>
  </div>
);

const StatusBar = () => {
  const [rotating, setRotating] = useState(true);
  return (
    <footer className="flex h-[26px] shrink-0 items-center overflow-hidden bg-[#f0f0f0] text-[12px] text-[#444]">
      <span className="w-[533px] shrink-0 pl-[6px]">Ready</span>
      <IconButton label="Zoom area" className="w-[22px]">
        <Icon>
          <path d="M1 10V1h10" stroke="#b5502a" strokeDasharray="1 1" />
          <circle cx="8" cy="8" r="5" fill="#fafafa" stroke="#777" strokeWidth="1.400" />
          <path d="M5.500 8h5M8 5.500v5" stroke="#c8601c" strokeWidth="1.400" />
          <path d="M11.500 11.500l4 4" stroke="#333" strokeWidth="2.200" />
        </Icon>
      </IconButton>
      <IconButton label="Pan" className="w-[22px]">
        <Icon>
          <path d="M8 2v12M2 8h12" stroke="#e08a1c" strokeWidth="2" />
          <path d="M8 0l3 4H5zM8 16l3-4H5zM0 8l4-3v6zM16 8l-4-3v6z" fill="#e08a1c" />
        </Icon>
      </IconButton>
      <button
        aria-label="Rotate"
        onClick={() => setRotating(!rotating)}
        className={`flex h-[22px] w-[22px] shrink-0 items-center justify-center ${rotating ? 'bg-[#c6c6c6]' : ''}`}
      >
        <Icon>
          <circle cx="8" cy="8" r="7" fill="url(#ball)" />
          <path d="M.500 8.500c4 2.500 8 2 11.500 0" stroke="#a35c0c" strokeWidth="3.400" />
          <path d="M.500 8.500c4 2.500 8 2 11.500 0" stroke="#f2a23a" strokeWidth="1.900" />
          <path d="M9.500 5l6.500-.5-1.500 7z" fill="#f2a23a" stroke="#a35c0c" strokeWidth=".7" />
        </Icon>
      </button>
      <IconButton label="Zoom" className="w-[22px]">
        <Icon>
          <circle cx="7" cy="7" r="6" fill="#fafafa" stroke="#777" strokeWidth="1.400" />
          <path d="M4 6l3-3 3 3zM4 8.500l3 3 3-3z" fill="#c8601c" />
          <path d="M3.500 7.200h7" stroke="#c8601c" />
          <path d="M11 11l4.500 4.500" stroke="#333" strokeWidth="2.400" />
        </Icon>
      </IconButton>
      <IconButton label="Rotate in plane" className="w-[22px]">
        <Icon>
          <path d="M3 3.500C0 9 3 14 8 14c5 0 6.500-5 5-9" stroke="#e08a1c" strokeWidth="3" />
          <path d="M9 3.500L15.500 1v6.500z" fill="#e08a1c" />
          <circle cx="8" cy="8" r="3" fill="url(#steel)" />
        </Icon>
      </IconButton>
      <Separator className="mx-[2px] h-4" />
      <IconButton label="Reset view">
        <Icon>
          <rect x="1.500" y="1.500" width="13" height="13" fill="#fafafa" stroke="#777" />
          <path d="M3.500 6.500v-3h3M9.500 3.500h3v3M12.500 9.500v3h-3M6.500 12.500h-3v-3M3.500 3.500l3 3M12.500 3.500l-3 3M12.500 12.500l-3-3M3.500 12.500l3-3" stroke="#c8601c" strokeWidth="1.200" />
        </Icon>
      </IconButton>
      <IconButton label="Cutting plane" className="w-5">
        <Icon>
          <path d="M4 4h8v8l-3 3H1l3-3z" fill="#c9682e" />
          <path d="M4 4h8l-3 3v8H1z" fill="#a64f1e" />
          <path d="M2 12l7-7v8l-1 1.500H1z" fill="#d98450" />
          <path d="M9 7l6-6M11.500 1H15v3.500" stroke="#333" strokeWidth="1.600" />
        </Icon>
      </IconButton>
      <IconButton label="Perspective" className="w-9">
        <Icon>
          <path d="M1 4l7-3 7 3v8l-7 3.500L1 12z" fill="#f4f4f4" stroke="#777" />
          <path d="M1 4l7 3 7-3M8 7v8.500" stroke="#777" />
        </Icon>
        <Arrow className="mt-3" />
      </IconButton>
      <Separator className="mx-[2px] h-4" />
      <IconButton label="Add result" className="w-[22px]">
        <Icon>
          <rect x=".5" y="3.500" width="11" height="11" fill="#fafafa" stroke="#555" />
          <path d="M2.500 13V6" stroke="#333" />
          <path d="M2.500 8l3 3 2-2 3 2" stroke="#b52a2a" />
          <path d="M9 12h6M9 14h6" stroke="#333" />
          <circle cx="11.500" cy="4.500" r="4.500" fill="#3ba53b" />
          <path d="M9 4.500h5M11.500 2v5" stroke="#fff" strokeWidth="1.400" />
        </Icon>
      </IconButton>
      <span className="ml-[10px] shrink-0">Raster=1.000</span>
      <span className="mx-[9px] h-4 w-px shrink-0 bg-[#555]" />
      <span className="shrink-0">Normal</span>
      <span className="mx-2 h-4 w-px shrink-0 bg-[#555]" />
      <span className="shrink-0">mm</span>
      <span className="ml-[7px] shrink-0">GHz</span>
    </footer>
  );
};

export default function App() {
  return (
    <div className="relative flex h-screen flex-col overflow-hidden border-y border-l border-[#9d9d9d] bg-[#f0f0f0] font-['Noto_Sans',sans-serif]">
      <IconDefs />
      <header className="shrink-0 rounded-tl-md bg-[#00558a]">
        <TitleBar />
        <MenuTabs />
      </header>
      <Ribbon />
      <main className="flex min-h-0 flex-1">
        <NavigationTree />
        <div className="flex min-w-0 flex-1 flex-col">
          <DocumentTabs />
          <div className="flex min-h-0 flex-1 flex-col border-l border-t border-[#8b8b8b] pl-px pt-px">
            <Viewport />
          </div>
          <ViewTabs />
          <div className="mt-1 flex h-[180px] shrink-0">
            <ParameterList />
            <ProgressPanel />
          </div>
        </div>
      </main>
      <StatusBar />
      {/* Soft shade along the right edge of the window */}
      <div className="pointer-events-none absolute inset-y-0 right-0 w-2 bg-gradient-to-r from-transparent to-black/25" />
    </div>
  );
}
